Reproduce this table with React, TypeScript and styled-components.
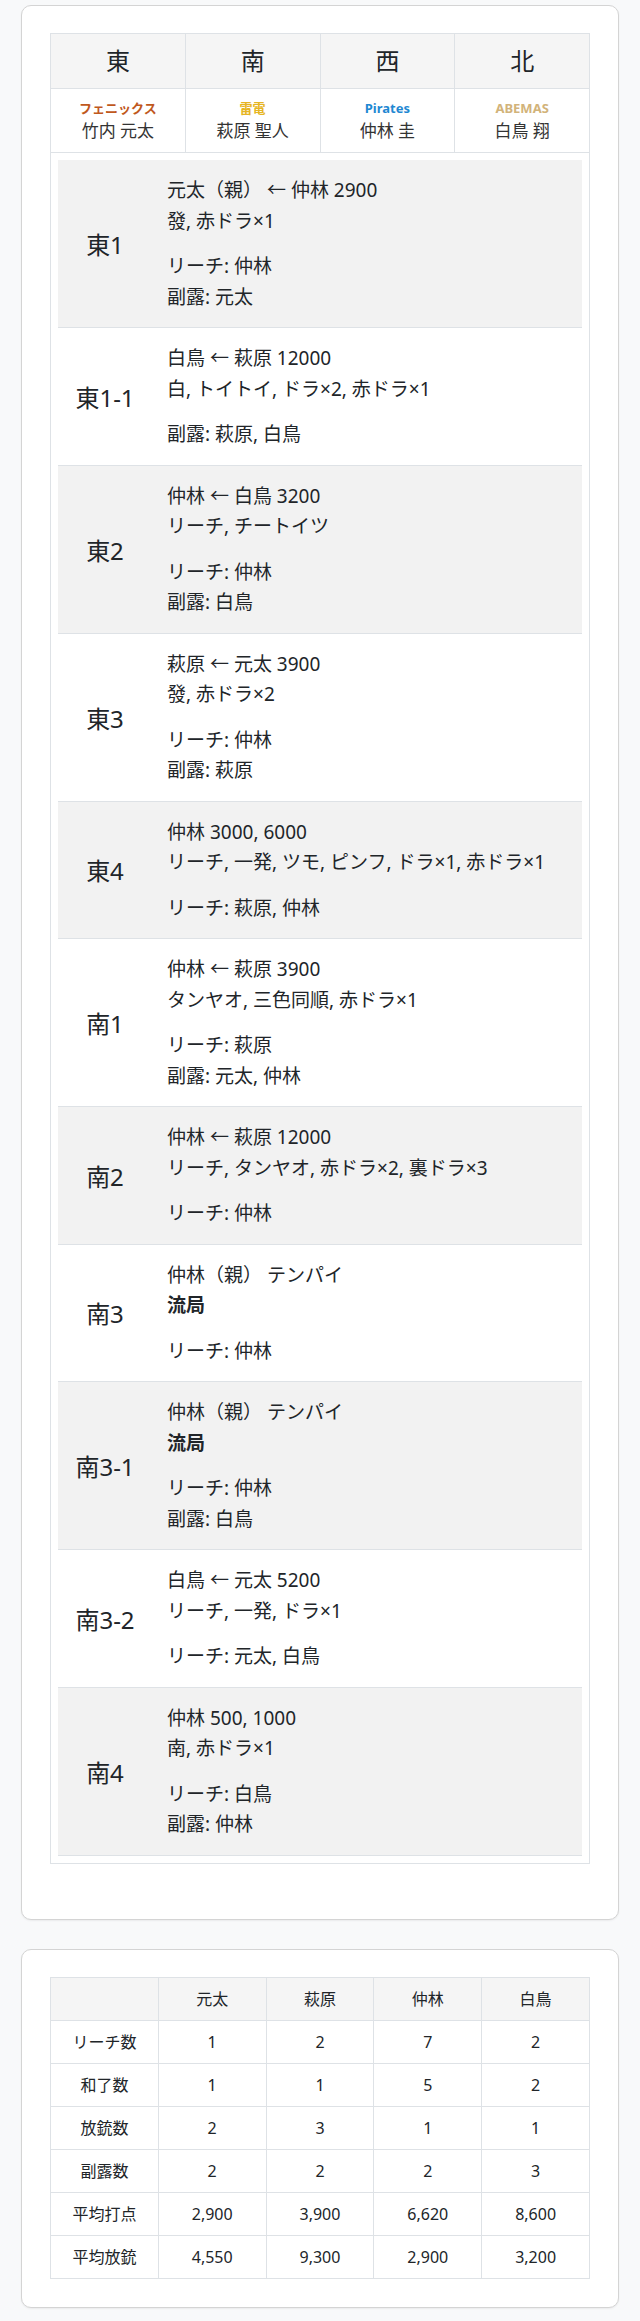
import React from 'react';
import styled, { createGlobalStyle } from 'styled-components';

const GlobalStyle = createGlobalStyle`
  body {
    margin: 0;
    background: #f8f9fa;
    color: #212529;
    font-family: "Noto Sans", "Noto Sans CJK JP", sans-serif;
  }
`;

const Page = styled.div`
  display: flex;
  flex-direction: column;
  gap: 29px;
  padding: 5px 21px 12px;
`;

const Card = styled.section<{ $bottom?: number }>`
  background: #fff;
  border: 1px solid #d4d4d4;
  border-radius: 10px;
  box-shadow: 0 1px 2px rgba(0, 0, 0, 0.06);
  padding: 27px 28px ${(p) => p.$bottom ?? 28}px;
`;

const Table = styled.table`
  width: 100%;
  border-collapse: collapse;
  table-layout: fixed;
`;

const WindCell = styled.th`
  border: 1px solid #dee2e6;
  background: #f5f5f5;
  font-size: 24px;
  font-weight: 400;
  line-height: 36px;
  padding: 9px 8px;
  text-align: center;
`;

const PlayerCell = styled.td`
  border: 1px solid #dee2e6;
  padding: 9px 8px 8px;
  text-align: center;
`;

const Team = styled.div<{ $color: string }>`
  font-size: 13px;
  font-weight: 700;
  line-height: 20px;
  color: ${(p) => p.$color};
`;

const Player = styled.div`
  font-size: 17px;
  line-height: 26px;
  color: #333;
`;

const BodyCell = styled.td`
  border: 1px solid #dee2e6;
  padding: 7px;
`;

const Round = styled.div<{ $shade: boolean }>`
  display: grid;
  grid-template-columns: 94px 1fr;
  align-items: center;
  padding: 15px 0;
  background: ${(p) => (p.$shade ? '#f2f2f2' : '#fff')};
  border-bottom: 1px solid #dee2e6;
`;

const RoundLabel = styled.div`
  font-size: 24px;
  text-align: center;
`;

const Detail = styled.div`
  padding-left: 15px;
  display: flex;
  flex-direction: column;
  gap: 15px;
  font-size: 19px;
`;

const Lines = styled.div`
  line-height: 30.5px;
`;

const Bold = styled.div`
  font-weight: 700;
`;

const StatHead = styled.th`
  border: 1px solid #dee2e6;
  background: #f5f5f5;
  font-size: 16px;
  font-weight: 400;
  line-height: 22px;
  padding: 10px 6px;
  text-align: center;
`;

const StatCell = styled.td`
  border: 1px solid #dee2e6;
  font-size: 16px;
  line-height: 22px;
  padding: 10px 6px;
  text-align: center;
`;

const seats = [
  { wind: '東', team: 'フェニックス', color: '#c0581d', name: '竹内 元太' },
  { wind: '南', team: '雷電', color: '#e6b523', name: '萩原 聖人' },
  { wind: '西', team: 'Pirates', color: '#1f88d2', name: '仲林 圭' },
  { wind: '北', team: 'ABEMAS', color: '#d2b37a', name: '白鳥 翔' },
];

type Hand = {
  label: string;
  result: string[];
  draw?: boolean;
  calls: string[];
};

const hands: Hand[] = [
  { label: '東1', result: ['元太（親） ← 仲林 2900', '發, 赤ドラ×1'], calls: ['リーチ: 仲林', '副露: 元太'] },
  { label: '東1-1', result: ['白鳥 ← 萩原 12000', '白, トイトイ, ドラ×2, 赤ドラ×1'], calls: ['副露: 萩原, 白鳥'] },
  { label: '東2', result: ['仲林 ← 白鳥 3200', 'リーチ, チートイツ'], calls: ['リーチ: 仲林', '副露: 白鳥'] },
  { label: '東3', result: ['萩原 ← 元太 3900', '發, 赤ドラ×2'], calls: ['リーチ: 仲林', '副露: 萩原'] },
  { label: '東4', result: ['仲林 3000, 6000', 'リーチ, 一発, ツモ, ピンフ, ドラ×1, 赤ドラ×1'], calls: ['リーチ: 萩原, 仲林'] },
  { label: '南1', result: ['仲林 ← 萩原 3900', 'タンヤオ, 三色同順, 赤ドラ×1'], calls: ['リーチ: 萩原', '副露: 元太, 仲林'] },
  { label: '南2', result: ['仲林 ← 萩原 12000', 'リーチ, タンヤオ, 赤ドラ×2, 裏ドラ×3'], calls: ['リーチ: 仲林'] },
  { label: '南3', result: ['仲林（親） テンパイ'], draw: true, calls: ['リーチ: 仲林'] },
  { label: '南3-1', result: ['仲林（親） テンパイ'], draw: true, calls: ['リーチ: 仲林', '副露: 白鳥'] },
  { label: '南3-2', result: ['白鳥 ← 元太 5200', 'リーチ, 一発, ドラ×1'], calls: ['リーチ: 元太, 白鳥'] },
  { label: '南4', result: ['仲林 500, 1000', '南, 赤ドラ×1'], calls: ['リーチ: 白鳥', '副露: 仲林'] },
];

const players = ['元太', '萩原', '仲林', '白鳥'];

const stats: [string, string[]][] = [
  ['リーチ数', ['1', '2', '7', '2']],
  ['和了数', ['1', '1', '5', '2']],
  ['放銃数', ['2', '3', '1', '1']],
  ['副露数', ['2', '2', '2', '3']],
  ['平均打点', ['2,900', '3,900', '6,620', '8,600']],
  ['平均放銃', ['4,550', '9,300', '2,900', '3,200']],
];

const App: React.FC = () => (
  <>
    <GlobalStyle />
    <Page>
      <Card $bottom={55}>
        <Table>
          <thead>
            <tr>
              {seats.map((s) => (
                <WindCell key={s.wind}>{s.wind}</WindCell>
              ))}
            </tr>
          </thead>
          <tbody>
            <tr>
              {seats.map((s) => (
                <PlayerCell key={s.wind}>
                  <Team $color={s.color}>{s.team}</Team>
                  <Player>{s.name}</Player>
                </PlayerCell>
              ))}
            </tr>
            <tr>
              <BodyCell colSpan={4}>
                {hands.map((h, i) => (
                  <Round key={h.label} $shade={i % 2 === 0}>
                    <RoundLabel>{h.label}</RoundLabel>
                    <Detail>
                      <Lines>
                        {h.result.map((r) => (
                          <div key={r}>{r}</div>
                        ))}
                        {h.draw && <Bold>流局</Bold>}
                      </Lines>
                      <Lines>
                        {h.calls.map((c) => (
                          <div key={c}>{c}</div>
                        ))}
                      </Lines>
                    </Detail>
                  </Round>
                ))}
              </BodyCell>
            </tr>
          </tbody>
        </Table>
      </Card>

      <Card>
        <Table>
          <thead>
            <tr>
              <StatHead />
              {players.map((p) => (
                <StatHead key={p}>{p}</StatHead>
              ))}
            </tr>
          </thead>
          <tbody>
            {stats.map(([label, values]) => (
              <tr key={label}>
                <StatCell>{label}</StatCell>
                {values.map((v, i) => (
                  <StatCell key={i}>{v}</StatCell>
                ))}
              </tr>
            ))}
          </tbody>
        </Table>
      </Card>
    </Page>
  </>
);

export default App;
